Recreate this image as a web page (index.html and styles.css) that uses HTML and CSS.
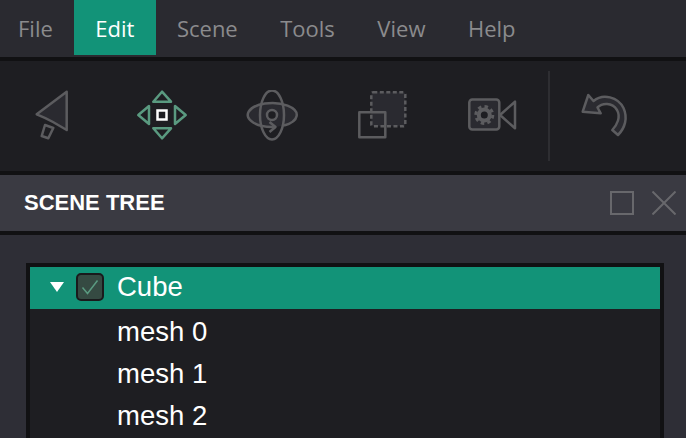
FILE: index.html
```html
<!DOCTYPE html>
<html lang="en">
<head>
    <meta charset="UTF-8">
    <title>Scene Editor</title>
    <link rel="stylesheet" href="styles.css">
</head>
<body>
    <div class="menubar">
        <div class="menu-item">File</div>
        <div class="menu-item active">Edit</div>
        <div class="menu-item">Scene</div>
        <div class="menu-item">Tools</div>
        <div class="menu-item">View</div>
        <div class="menu-item">Help</div>
    </div>

    <div class="toolbar">
        <!-- Select -->
        <svg class="tool" viewBox="0 0 52 52">
            <path class="line" d="M40.7 1.7L10.7 24.3Q20 28 27 32L40.7 40Z"/>
            <path class="line nofill" d="M19 35L27.3 38L22.3 48.3L15.7 46Z"/>
        </svg>
        <!-- Move -->
        <svg class="tool" viewBox="0 0 52 52">
            <path class="green" d="M26 1.7L17.3 11.7H35Z"/>
            <path class="green" d="M26 48.3L17.3 38.3H35Z"/>
            <path class="green" d="M2.3 25L13 16V34Z"/>
            <path class="green" d="M49.7 25L39 16V34Z"/>
            <rect class="center" x="21.5" y="20.5" width="9" height="9"/>
        </svg>
        <!-- Rotate -->
        <svg class="tool" viewBox="0 0 52 52">
            <ellipse class="orbit-fill" cx="26" cy="25" rx="24.5" ry="12"/>
            <path class="line nofill" d="M29 36.9A24.5 12 0 1 1 38 35.5"/>
            <ellipse class="line nofill" cx="26" cy="25" rx="12" ry="24.5"/>
            <circle class="hub" cx="26" cy="25" r="5"/>
            <path class="line nofill" d="M23.5 32L29.5 37L23.5 42"/>
        </svg>
        <!-- Scale -->
        <svg class="tool" viewBox="0 0 52 52">
            <rect class="dashed" x="15.3" y="2.3" width="34" height="34" rx="2"/>
            <rect class="line nofill" x="3.3" y="22.3" width="26" height="25"/>
        </svg>
        <!-- Camera -->
        <svg class="tool" viewBox="0 0 52 52">
            <rect class="line" x="3.3" y="9.5" width="30" height="30" rx="3"/>
            <path class="line nofill" d="M34 25L49 11.7V38.3Z"/>
            <circle class="gear" cx="18.3" cy="25" r="5.5"/>
            <circle class="gear-teeth" cx="18.3" cy="25" r="8.5"/>
        </svg>
        <div class="separator"></div>
        <!-- Undo -->
        <svg class="tool undo" viewBox="0 0 52 52">
            <path class="line" d="M10.3 5L4.7 21.7L22.7 23.3L19.5 17.5C24 13 34 12 39 20C43 27 39 35 34.3 40L40 45C47 38 50 28 45.5 18C40 7 25 3 15.5 11Z"/>
        </svg>
    </div>

    <div class="panel-header">
        <span class="panel-title">SCENE TREE</span>
        <div class="panel-buttons">
            <svg class="panel-icon" viewBox="0 0 24 24">
                <rect x="1" y="1" width="22" height="22"/>
            </svg>
            <svg class="panel-icon" viewBox="0 0 24 24">
                <path d="M0.5 0.5L23.5 23.5M23.5 0.5L0.5 23.5"/>
            </svg>
        </div>
    </div>

    <div class="panel-body">
        <div class="tree">
            <div class="tree-row selected">
                <span class="arrow"></span>
                <span class="checkbox">
                    <svg viewBox="0 0 24 24"><path d="M4.5 12.5L9.5 18.5L19.5 5.5"/></svg>
                </span>
                <span>Cube</span>
            </div>
            <div class="tree-row child">mesh 0</div>
            <div class="tree-row child">mesh 1</div>
            <div class="tree-row child">mesh 2</div>
        </div>
    </div>
</body>
</html>
```

FILE: styles.css
```css
html, body {
    height: 438px;
    overflow: hidden;
}
body {
    margin: 0;
    background-color: #2e2e36;
    font-family: "Liberation Sans", Arial, sans-serif;
}

/* menu */
.menubar {
    display: flex;
    height: 57px;
    background-color: #2a2a30;
    font-family: "Open Sans", sans-serif;
    font-size: 22px;
    color: #8b8b8d;
}
.menu-item {
    height: 55px;
    line-height: 57px;
    padding: 0 21.25px;
}
.menu-item:first-child {
    padding-left: 18px;
}
.menu-item.active {
    background-color: #129378;
    color: white;
}

/* toolbar */
.toolbar {
    display: flex;
    align-items: center;
    height: 110px;
    padding-left: 26px;
    background-color: #1e1e22;
    border-top: 4px solid #111113;
    border-bottom: 4px solid #111113;
}
.tool {
    width: 52px;
    height: 52px;
    margin-right: 58px;
}
.tool .line {
    fill: #2a2a30;
    stroke: #5c5c5f;
    stroke-width: 2.5;
    stroke-linejoin: round;
}
.tool .nofill {
    fill: none;
}
.tool .green {
    fill: #1e1e22;
    stroke: #5a9a80;
    stroke-width: 2.5;
    stroke-linejoin: round;
}
.tool .center {
    fill: none;
    stroke: white;
    stroke-width: 2.5;
}
.tool .orbit-fill {
    fill: #2a2a30;
}
.tool .hub {
    fill: #1e1e22;
    stroke: #5c5c5f;
    stroke-width: 2.5;
}
.tool .dashed {
    fill: #2a2a30;
    stroke: #5c5c5f;
    stroke-width: 2.5;
    stroke-dasharray: 4 2.5;
}
.tool .gear {
    fill: #1e1e22;
    stroke: #5c5c5f;
    stroke-width: 4;
}
.tool .gear-teeth {
    fill: none;
    stroke: #5c5c5f;
    stroke-width: 3;
    stroke-dasharray: 3.5 3.17;
}
.separator {
    width: 2px;
    height: 90px;
    margin-left: -28px;
    background-color: #2e2e32;
}
.tool.undo {
    margin-left: 28px;
    margin-right: 0;
}

/* panel */
.panel-header {
    display: flex;
    justify-content: space-between;
    align-items: center;
    height: 56px;
    padding: 0 10px 0 24px;
    background-color: #3a3a42;
    border-bottom: 4px solid #111113;
}
.panel-title {
    font-size: 22px;
    font-weight: bold;
    color: white;
}
.panel-buttons {
    display: flex;
    gap: 18px;
}
.panel-icon {
    display: block;
    width: 24px;
    height: 24px;
    fill: none;
    stroke: #68686c;
    stroke-width: 2;
}
.panel-body {
    padding: 28px 22px 0 26px;
}
.tree {
    box-sizing: border-box;
    height: 175px;
    background-color: #1e1e22;
    border: 4px solid #111113;
    border-bottom: none;
}
.tree-row {
    box-sizing: border-box;
    display: flex;
    align-items: center;
    height: 42px;
    padding-left: 20px;
    font-size: 27.5px;
    color: white;
}
.tree-row.selected {
    padding-bottom: 2px;
    background-color: #129378;
}
.tree-row.child {
    padding-top: 4px;
    padding-left: 87px;
}
.arrow {
    width: 0;
    height: 0;
    margin-right: 12px;
    border-left: 7px solid transparent;
    border-right: 7px solid transparent;
    border-top: 10px solid white;
}
.checkbox {
    box-sizing: border-box;
    width: 28px;
    height: 28px;
    margin-right: 13px;
    background-color: #354a42;
    border: 2px solid #1a1a1c;
    border-radius: 5px;
}
.checkbox svg {
    display: block;
    width: 24px;
    height: 24px;
    fill: none;
    stroke: #5a9a80;
    stroke-width: 1.5;
}
```
